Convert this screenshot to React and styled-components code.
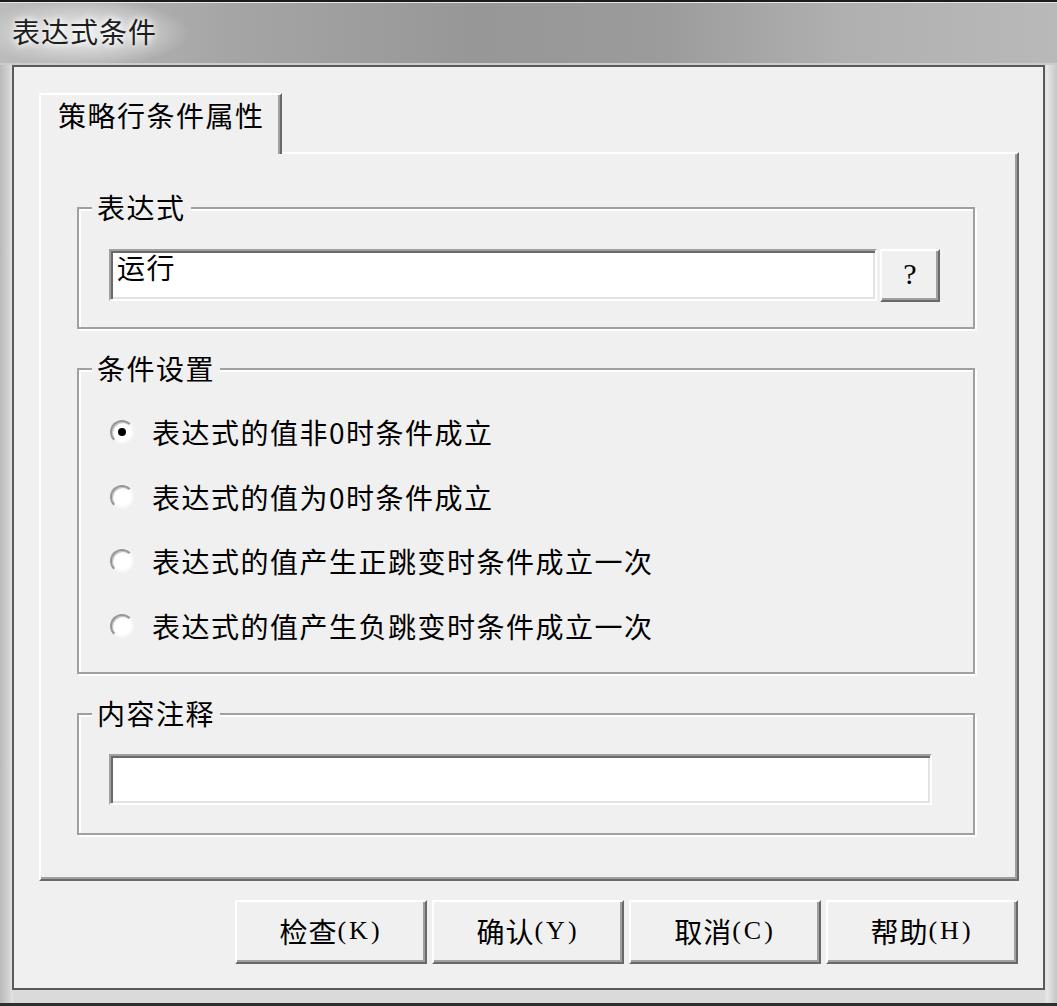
import React from "react";
import styled, { createGlobalStyle } from "styled-components";

const CJK = `"Noto Sans CJK SC", "Noto Sans", sans-serif`;

const Global = createGlobalStyle`
  html, body { margin: 0; padding: 0; background: #d8d8d8; }
  body { font-family: ${CJK}; color: #000; }
  #root { width: 1057px; height: 1006px; }
`;

const Window = styled.div`
  width: 1057px;
  height: 1006px;
  box-sizing: border-box;
  display: flex;
  flex-direction: column;
  overflow: hidden;
  border-top: 2px solid #1c1c1c;
  border-bottom: 3px solid #2e2e2e;
  background: linear-gradient(to right, #bababa 0px, #d6d6d6 10px, #e4e4e4 12px, #dadada 13px, #dadada 1044px, #e6e6e6 1047px, #c6c6c6 1057px);
`;

const TitleBar = styled.div`
  height: 63px;
  box-sizing: border-box;
  border-top: 1px solid #e6e6e6;
  border-bottom: 2px solid #cdcdcd;
  display: flex;
  align-items: center;
  padding: 0 0 4px 12px;
  background:
    radial-gradient(ellipse 105px 34px at 84px 30px, rgba(236,236,236,0.95) 0%, rgba(222,222,222,0.65) 55%, rgba(200,200,200,0) 100%),
    linear-gradient(to right, #bcbcbc 0%, #a5a5a5 22%, #979797 45%, #9b9b9b 62%, #b0b0b0 80%, #b9b9b9 100%);
`;

const Title = styled.span`
  font-size: 28px;
  line-height: 30px;
  letter-spacing: 1px;
  color: #1e1e1e;
  text-shadow: 0 0 6px #fff, 0 0 10px #fff;
`;

const Frame = styled.div`
  flex: 1;
  display: flex;
  padding: 0 12px 13px;
`;

const Client = styled.div`
  flex: 1;
  display: flex;
  flex-direction: column;
  border: 2px solid #5a5a5a;
  background: #f0f0f0;
  padding: 26px 24px 0 25px;
`;

const TabStrip = styled.div`
  display: flex;
`;

const Tab = styled.div`
  position: relative;
  z-index: 1;
  width: 243px;
  height: 61px;
  margin-bottom: -2px;
  box-sizing: border-box;
  border-top: 2px solid #fff;
  border-left: 2px solid #fff;
  border-right: 2px solid #696969;
  box-shadow: inset -2px 0 0 #a0a0a0;
  background: #f0f0f0;
  padding: 6px 0 0 17px;
  font-size: 28px;
  line-height: 28px;
  letter-spacing: 1.5px;
  white-space: nowrap;
`;

const Panel = styled.div`
  height: 729px;
  box-sizing: border-box;
  border: 2px solid;
  border-color: #fff #696969 #696969 #fff;
  box-shadow: inset -2px -2px 0 #a0a0a0;
  padding: 53px 0 0 36px;
  display: flex;
  flex-direction: column;
  gap: 39px;
`;

const Group = styled.div`
  width: 898px;
  box-sizing: border-box;
  border: 2px solid #a0a0a0;
  box-shadow: inset 2px 2px 0 #fff, 2px 2px 0 #fff;
  display: flex;
  flex-direction: column;
`;

const Legend = styled.div`
  width: fit-content;
  margin: -16px 0 0 13px;
  padding: 0 5px;
  background: #f0f0f0;
  font-size: 28px;
  line-height: 28px;
  letter-spacing: 1.5px;
  white-space: nowrap;
`;

const GroupBody = styled.div`
  display: flex;
  flex-direction: ${(p) => (p.$column ? "column" : "row")};
  gap: ${(p) => p.$gap || 0}px;
  padding: ${(p) => p.$pt}px 0 ${(p) => p.$pb}px ${(p) => p.$pl}px;
`;

const Edit = styled.div`
  width: ${(p) => p.$w}px;
  height: ${(p) => p.$h}px;
  box-sizing: border-box;
  border: 2px solid;
  border-color: #a0a0a0 #fff #fff #a0a0a0;
  box-shadow: inset 2px 2px 0 #696969, inset -2px -2px 0 #e3e3e3;
  background: #fff;
  padding: 2px 0 0 6px;
  font-size: 28px;
  line-height: 28px;
  letter-spacing: 1.5px;
  white-space: nowrap;
`;

const RaisedButton = styled.div`
  width: ${(p) => p.$w}px;
  height: ${(p) => p.$h}px;
  box-sizing: border-box;
  border: 2px solid;
  border-color: #fff #696969 #696969 #fff;
  box-shadow: inset -2px -2px 0 #a0a0a0;
  background: #f0f0f0;
  display: flex;
  align-items: center;
  justify-content: center;
  font-size: 28px;
  line-height: 30px;
  letter-spacing: 1px;
  white-space: nowrap;
  padding-bottom: ${(p) => p.$pb || 0}px;
`;

const Latin = styled.span`
  font-family: "Liberation Serif", "DejaVu Serif", serif;
  font-size: ${(p) => p.$size || 26}px;
  letter-spacing: ${(p) => (p.$size ? 0 : 3)}px;
`;

const RadioRow = styled.div`
  display: flex;
  align-items: center;
  gap: 18px;
  height: 32px;
`;

const RadioCircle = styled.span`
  position: relative;
  width: 24px;
  height: 24px;
  box-sizing: border-box;
  border-radius: 50%;
  border: 2px solid;
  border-color: #979797 #f6f6f6 #f6f6f6 #979797;
  box-shadow: inset 1px 1px 1px #bdbdbd;
  background: #fff;
  flex: none;
  &::after {
    content: "";
    display: ${(p) => (p.$checked ? "block" : "none")};
    position: absolute;
    left: 6px;
    top: 6px;
    width: 8px;
    height: 8px;
    border-radius: 50%;
    background: #000;
  }
`;

const RadioLabel = styled.span`
  font-size: 28px;
  line-height: 32px;
  letter-spacing: 1.5px;
  white-space: nowrap;
`;

const ButtonRow = styled.div`
  display: flex;
  justify-content: flex-end;
  gap: 5px;
  margin-top: 19px;
  padding-right: 1px;
`;

const options = [
  "表达式的值非0时条件成立",
  "表达式的值为0时条件成立",
  "表达式的值产生正跳变时条件成立一次",
  "表达式的值产生负跳变时条件成立一次",
];

const buttons = [
  ["检查", "(K)"],
  ["确认", "(Y)"],
  ["取消", "(C)"],
  ["帮助", "(H)"],
];

export default function App() {
  return (
    <>
      <Global />
      <Window>
        <TitleBar>
          <Title>表达式条件</Title>
        </TitleBar>
        <Frame>
          <Client>
            <TabStrip>
              <Tab>策略行条件属性</Tab>
            </TabStrip>
            <Panel>
              <Group>
                <Legend>表达式</Legend>
                <GroupBody $pt={28} $pb={25} $pl={30} $gap={3}>
                  <Edit $w={768} $h={52}>运行</Edit>
                  <RaisedButton $w={60} $h={53} $pb={4}>
                    <Latin $size={30}>?</Latin>
                  </RaisedButton>
                </GroupBody>
              </Group>
              <Group>
                <Legend>条件设置</Legend>
                <GroupBody $column $pt={34} $pb={30} $pl={31} $gap={32.5}>
                  {options.map((o, i) => (
                    <RadioRow key={o}>
                      <RadioCircle $checked={i === 0} />
                      <RadioLabel>{o}</RadioLabel>
                    </RadioRow>
                  ))}
                </GroupBody>
              </Group>
              <Group>
                <Legend>内容注释</Legend>
                <GroupBody $pt={27} $pb={28} $pl={30}>
                  <Edit $w={823} $h={51} />
                </GroupBody>
              </Group>
            </Panel>
            <ButtonRow>
              {buttons.map(([t, m]) => (
                <RaisedButton key={t} $w={192} $h={64} $pb={2}>
                  {t}
                  <Latin>{m}</Latin>
                </RaisedButton>
              ))}
            </ButtonRow>
          </Client>
        </Frame>
      </Window>
    </>
  );
}
